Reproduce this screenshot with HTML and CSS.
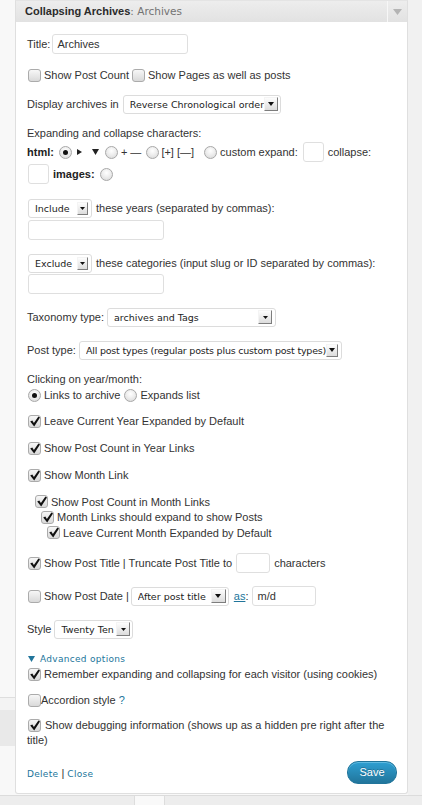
FILE: index.html
```html
<!DOCTYPE html>
<html>
<head>
<meta charset="utf-8">
<title>Collapsing Archives widget</title>
<link rel="stylesheet" href="styles.css">
</head>
<body>
<div class="page">
  <div class="side-l">
    <div class="shelf"><div class="shelf-a"></div><div class="shelf-b"></div></div>
  </div>
  <div class="widget">
    <div class="w-head">
      <h4 class="w-title">Collapsing Archives<span class="w-sub">: Archives</span></h4>
      <span class="w-toggle"><svg width="9" height="6" viewBox="0 0 9 6"><path d="M0 0H9L4.5 6Z" fill="#b4b4b4"/></svg></span>
    </div>
    <div class="w-inside">
      <div class="row h20 first">
        <span>Title:</span>
        <input class="inp w136 ml2" type="text" value="Archives">
      </div>
      <div class="row mt13">
        <span class="cb ml1"></span><span class="ml3">Show Post Count</span>
        <span class="cb ml3"></span><span class="ml3">Show Pages as well as posts</span>
      </div>
      <div class="row h20 mt11">
        <span>Display archives in</span>
        <span class="sel w158 ml4"><span class="sel-text">Reverse Chronological order</span><span class="sel-btn"><svg width="6" height="4" viewBox="0 0 6 4"><path d="M0 0H6L3 4Z"/></svg></span></span>
      </div>
      <div class="row mt11"><span>Expanding and collapse characters:</span></div>
      <div class="row h20 mt1">
        <b class="strong">html:</b>
        <span class="rd on ml5"></span>
        <svg class="ml5" width="5" height="6" viewBox="0 0 5 6"><path d="M0 0L5 3L0 6Z" fill="#222"/></svg>
        <svg class="ml10" width="7" height="6" viewBox="0 0 7 6"><path d="M0 0H7L3.5 6Z" fill="#222"/></svg>
        <span class="rd ml6"></span>
        <span class="ml3">+ —</span>
        <span class="rd ml5"></span>
        <span class="ml2">[+] [—]</span>
        <span class="rd ml10"></span>
        <span class="ml3">custom expand:</span>
        <input class="inp w21 ml5" type="text" value="">
        <span class="ml4">collapse:</span>
      </div>
      <div class="row h20 mt2">
        <input class="inp w21 ml1" type="text" value="">
        <b class="strong ml4">images:</b>
        <span class="rd ml5"></span>
      </div>
      <div class="row h20 mt14">
        <span class="sel w64 ml1 pr3"><span class="sel-text">Include</span><span class="sel-btn nb"><svg width="5" height="3" viewBox="0 0 5 3"><path d="M0 0H5L2.5 3Z"/></svg></span></span>
        <span class="ml4">these years (separated by commas):</span>
      </div>
      <div class="row h20 mt2">
        <input class="inp w136 ml1" type="text" value="">
      </div>
      <div class="row h20 mt13">
        <span class="sel w64 ml1 pr3"><span class="sel-text">Exclude</span><span class="sel-btn nb"><svg width="5" height="3" viewBox="0 0 5 3"><path d="M0 0H5L2.5 3Z"/></svg></span></span>
        <span class="ml4">these categories (input slug or ID separated by commas):</span>
      </div>
      <div class="row h20 mt1">
        <input class="inp w136 ml1" type="text" value="">
      </div>
      <div class="row h20 mt13">
        <span>Taxonomy type:</span>
        <span class="sel w169 ml3 pr3"><span class="sel-text">archives and Tags</span><span class="sel-btn"><svg width="5" height="3" viewBox="0 0 5 3"><path d="M0 0H5L2.5 3Z"/></svg></span></span>
      </div>
      <div class="row h20 mt13">
        <span>Post type:</span>
        <span class="sel w263 ml3 pr3"><span class="sel-text tight">All post types (regular posts plus custom post types)</span><span class="sel-btn nb2"><svg width="6" height="4" viewBox="0 0 6 4"><path d="M0 0H6L3 4Z"/></svg></span></span>
      </div>
      <div class="row mt11"><span>Clicking on year/month:</span></div>
      <div class="row">
        <span class="rd on ml1"></span><span class="ml3">Links to archive</span>
        <span class="rd ml4"></span><span class="ml3">Expands list</span>
      </div>
      <div class="row mt10"><span class="cb on ml1"><svg width="11" height="11" viewBox="0 0 11 11"><path d="M1.2 5.6L3.3 4.4L4.9 7L9.4 0.4L11 1.5L5.2 10.6Z"/></svg></span><span class="ml3">Leave Current Year Expanded by Default</span></div>
      <div class="row mt11"><span class="cb on ml1"><svg width="11" height="11" viewBox="0 0 11 11"><path d="M1.2 5.6L3.3 4.4L4.9 7L9.4 0.4L11 1.5L5.2 10.6Z"/></svg></span><span class="ml3">Show Post Count in Year Links</span></div>
      <div class="row mt11"><span class="cb on ml1"><svg width="11" height="11" viewBox="0 0 11 11"><path d="M1.2 5.6L3.3 4.4L4.9 7L9.4 0.4L11 1.5L5.2 10.6Z"/></svg></span><span class="ml3">Show Month Link</span></div>
      <div class="row nest mt11"><span class="cb on ml8"><svg width="11" height="11" viewBox="0 0 11 11"><path d="M1.2 5.6L3.3 4.4L4.9 7L9.4 0.4L11 1.5L5.2 10.6Z"/></svg></span><span class="ml3">Show Post Count in Month Links</span></div>
      <div class="row nest"><span class="cb on ml14"><svg width="11" height="11" viewBox="0 0 11 11"><path d="M1.2 5.6L3.3 4.4L4.9 7L9.4 0.4L11 1.5L5.2 10.6Z"/></svg></span><span class="ml3">Month Links should expand to show Posts</span></div>
      <div class="row nest"><span class="cb on ml20"><svg width="11" height="11" viewBox="0 0 11 11"><path d="M1.2 5.6L3.3 4.4L4.9 7L9.4 0.4L11 1.5L5.2 10.6Z"/></svg></span><span class="ml3">Leave Current Month Expanded by Default</span></div>
      <div class="row h20 mt12h">
        <span class="cb on ml1"><svg width="11" height="11" viewBox="0 0 11 11"><path d="M1.2 5.6L3.3 4.4L4.9 7L9.4 0.4L11 1.5L5.2 10.6Z"/></svg></span>
        <span class="ml3">Show Post Title | Truncate Post Title to</span>
        <input class="inp w34 ml4" type="text" value="">
        <span class="ml4">characters</span>
      </div>
      <div class="row h20 mt13">
        <span class="cb ml1"></span>
        <span class="ml3">Show Post Date |</span>
        <span class="sel w98 ml2"><span class="sel-text">After post title</span><span class="sel-btn wide"><svg width="6" height="4" viewBox="0 0 6 4"><path d="M0 0H6L3 4Z"/></svg></span></span>
        <a class="link u ml5" href="#">as</a><span>:</span>
        <input class="inp w64 ml4" type="text" value="m/d">
      </div>
      <div class="row h20 mt13">
        <span>Style</span>
        <span class="sel w79 ml3"><span class="sel-text">Twenty Ten</span><span class="sel-btn"><svg width="5" height="3" viewBox="0 0 5 3"><path d="M0 0H5L2.5 3Z"/></svg></span></span>
      </div>
      <div class="row adv mt13">
        <svg class="ml1" width="7" height="6" viewBox="0 0 7 6"><path d="M0 0H7L3.5 6Z" fill="#21759b"/></svg>
        <a class="link small ml5" href="#">Advanced options</a>
      </div>
      <div class="row"><span class="cb on ml1"><svg width="11" height="11" viewBox="0 0 11 11"><path d="M1.2 5.6L3.3 4.4L4.9 7L9.4 0.4L11 1.5L5.2 10.6Z"/></svg></span><span class="ml3">Remember expanding and collapsing for each visitor (using cookies)</span></div>
      <div class="row mt10"><span class="cb ml1"></span><span>Accordion style <a class="link" href="#">?</a></span></div>
      <div class="para mt10"><span class="cb on inl"><svg width="11" height="11" viewBox="0 0 11 11"><path d="M1.2 5.6L3.3 4.4L4.9 7L9.4 0.4L11 1.5L5.2 10.6Z"/></svg></span>Show debugging information (shows up as a hidden pre right after the title)</div>
      <div class="w-foot">
        <span><a class="link small" href="#">Delete</a> | <a class="link small" href="#">Close</a></span>
        <button class="save" type="button">Save</button>
      </div>
    </div>
  </div>
  <div class="side-r"></div>
</div>
<div class="dock"><div class="dock-cell"></div></div>
</body>
</html>
```

FILE: styles.css
```css
* { box-sizing: border-box; }

body {
  margin: 0;
  width: 422px;
  height: 805px;
  overflow: hidden;
  background: #f8f8f8;
  font: 11px/16px "Liberation Sans", Arial, sans-serif;
  color: #333;
}

.page { display: flex; height: 795px; }

.side-l { width: 15px; padding-top: 697px; }
.shelf { border-top: 1px solid #dedede; }
.shelf-a { height: 12px; background: #f3f3f3; }
.shelf-b { height: 36px; background: #e9e9e9; }

.side-r { flex: 1; background: #f1f1f1; }

.widget {
  width: 393px;
  height: 794px;
  background: #fff;
  border: 1px solid #dfdfdf;
  border-top-color: #e4e4e4;
  border-radius: 0 0 3px 3px;
  display: flex;
  flex-direction: column;
}

.w-head {
  height: 21px;
  display: flex;
  align-items: center;
  background: linear-gradient(#ededed, #e2e2e2);
}
.w-title {
  flex: 1;
  margin: 0;
  padding-left: 9px;
  font-size: 11px;
  line-height: 21px;
  font-weight: bold;
  color: #2b2b2b;
}
.w-sub {
  font: normal 10.5px "DejaVu Sans", sans-serif;
  color: #737373;
}
.w-toggle {
  width: 20px;
  height: 21px;
  border-left: 1px solid #f7f7f7;
  display: flex;
  align-items: center;
  justify-content: center;
}

.w-inside {
  flex: 1;
  padding: 12px 10px 9px 11px;
  display: flex;
  flex-direction: column;
}

.row {
  display: flex;
  align-items: center;
  height: 16px;
  white-space: nowrap;
  flex-shrink: 0;
}
.row.h20 { height: 20px; }
.row.nest { height: 15.5px; }
.row.adv { height: 14px; }

.mt1 { margin-top: 1px; }
.mt2 { margin-top: 2px; }
.mt10 { margin-top: 10px; }
.mt11 { margin-top: 11px; }
.mt12h { margin-top: 12.5px; }
.mt13 { margin-top: 13px; }
.mt14 { margin-top: 14px; }

.ml1 { margin-left: 1px; }
.ml2 { margin-left: 2px; }
.ml3 { margin-left: 3px; }
.ml4 { margin-left: 4px; }
.ml5 { margin-left: 5px; }
.ml6 { margin-left: 6px; }
.ml8 { margin-left: 8px; }
.ml10 { margin-left: 10px; }
.ml14 { margin-left: 14px; }
.ml20 { margin-left: 20px; }

.strong { font-weight: bold; color: #222; }

.inp {
  height: 20px;
  margin-top: 0;
  margin-bottom: 0;
  margin-right: 0;
  padding: 0 4px;
  border: 1px solid #dfdfdf;
  border-radius: 3px;
  background: #fff;
  font: 11px/18px "Liberation Sans", Arial, sans-serif;
  color: #333;
  outline: none;
}
.w21 { width: 21px; }
.w34 { width: 34px; }
.w64 { width: 64px; }
.w79 { width: 79px; }
.w98 { width: 98px; }
.w136 { width: 136px; }
.w158 { width: 158px; }
.w169 { width: 169px; }
.w263 { width: 263px; }

.sel {
  height: 19px;
  display: inline-flex;
  align-items: center;
  padding: 0 2px 0 6px;
  border: 1px solid #dcdcdc;
  border-radius: 3px;
  background: #fff;
  overflow: hidden;
  flex-shrink: 0;
}
.sel.pr3 { padding-right: 3px; }
.sel-text {
  flex: 1;
  min-width: 0;
  overflow: hidden;
  white-space: nowrap;
  font: 9.5px/17px "DejaVu Sans", sans-serif;
  color: #222;
}
.sel-text.tight { letter-spacing: -0.2px; }
.sel-btn {
  width: 14px;
  height: 14px;
  flex-shrink: 0;
  display: flex;
  align-items: center;
  justify-content: center;
  border: 1px solid;
  border-color: #f4f4f4 #7d7d7d #7d7d7d #f4f4f4;
  background: linear-gradient(#fdfdfd, #dcdcdc);
}
.sel-btn.nb { width: 11px; height: 13px; }
.sel-btn.nb2 { width: 12px; height: 13px; }
.sel-btn.wide { width: 15px; }
.sel-btn svg path { fill: #111; }

.cb {
  width: 13px;
  height: 13px;
  flex-shrink: 0;
  display: inline-flex;
  align-items: center;
  justify-content: center;
  border: 1px solid #ababab;
  border-radius: 3px;
  background: linear-gradient(#f7f7f7, #d9d9d9);
}
.cb svg path { fill: #111; }
.cb.inl {
  vertical-align: -2px;
  margin: 0 4px 0 1px;
}

.rd {
  width: 13px;
  height: 13px;
  flex-shrink: 0;
  border: 1px solid #a8a8a8;
  border-radius: 50%;
  background: radial-gradient(circle at 50% 35%, #ffffff 0, #f0f0f0 40%, #d6d6d6 100%);
  display: inline-flex;
  align-items: center;
  justify-content: center;
}
.rd.on::after {
  content: "";
  width: 5px;
  height: 5px;
  border-radius: 50%;
  background: #111;
}

.link { color: #21759b; text-decoration: none; }
.link.u { text-decoration: underline; }
.link.small {
  font: 9px/14px "DejaVu Sans", sans-serif;
  letter-spacing: 0.3px;
}

.para {
  line-height: 15px;
  flex-shrink: 0;
}

.w-foot {
  margin-top: auto;
  display: flex;
  align-items: center;
  justify-content: space-between;
  height: 23px;
}

.save {
  width: 50px;
  height: 23px;
  padding: 0;
  border: 1px solid #21759b;
  border-radius: 11px;
  background: linear-gradient(#2e9fd2, #21759b);
  box-shadow: inset 0 1px 0 rgba(130, 205, 235, 0.6);
  color: #fff;
  font: 11px/21px "Liberation Sans", Arial, sans-serif;
  text-shadow: 0 -1px 0 rgba(0, 0, 0, 0.25);
}

.dock {
  height: 10px;
  border-top: 1px solid #dcdcdc;
  background: #ededed;
  padding-left: 134px;
}
.dock-cell {
  width: 31px;
  height: 9px;
  background: #f9f9f9;
  border-left: 1px solid #dddddd;
  border-right: 1px solid #dddddd;
}
```
